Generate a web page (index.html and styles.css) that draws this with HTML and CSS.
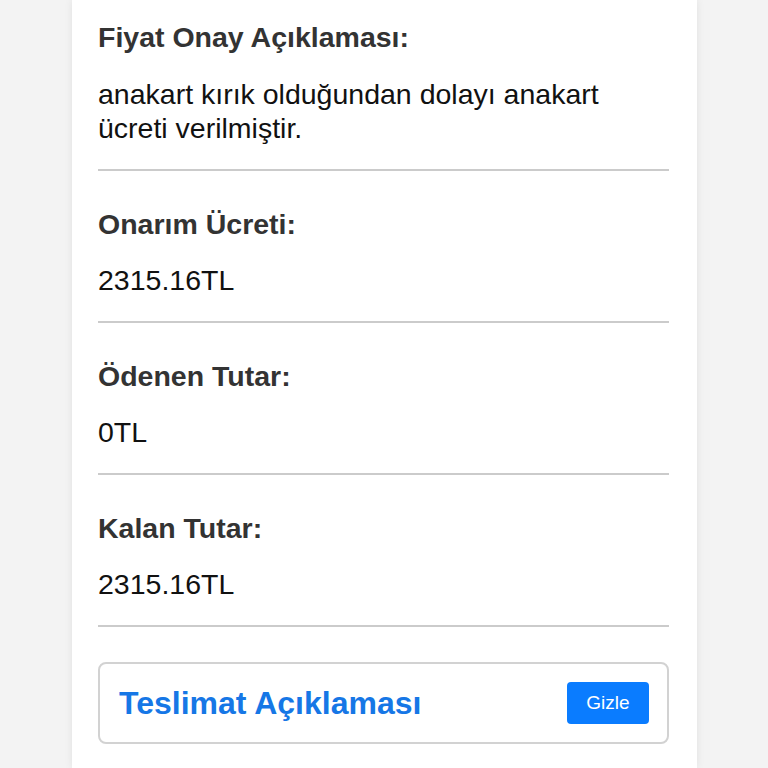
FILE: index.html
```html
<!DOCTYPE html>
<html lang="tr">
<head>
<meta charset="utf-8">
<link rel="stylesheet" href="styles.css">
</head>
<body>
<div class="page">
  <div class="card">
    <div class="section">
      <h3 class="label">Fiyat Onay Açıklaması:</h3>
      <p class="value">anakart kırık olduğundan dolayı anakart ücreti verilmiştir.</p>
    </div>
    <div class="section">
      <h3 class="label">Onarım Ücreti:</h3>
      <p class="value">2315.16TL</p>
    </div>
    <div class="section">
      <h3 class="label">Ödenen Tutar:</h3>
      <p class="value">0TL</p>
    </div>
    <div class="section">
      <h3 class="label">Kalan Tutar:</h3>
      <p class="value">2315.16TL</p>
    </div>
    <div class="panel">
      <h2 class="panel-title">Teslimat Açıklaması</h2>
      <button class="btn">Gizle</button>
    </div>
  </div>
</div>
</body>
</html>
```

FILE: styles.css
```css
html, body {
  margin: 0;
  padding: 0;
  background: #f3f3f3;
  font-family: "Liberation Sans", Arial, sans-serif;
}
.page {
  padding-left: 72px;
}
.card {
  width: 625px;
  min-height: 768px;
  box-sizing: border-box;
  background: #fff;
  padding: 21px 28px 0 26px;
  box-shadow: 0 0 8px rgba(0,0,0,0.08);
}
.section {
  border-bottom: 2px solid #cbcbcb;
  padding-bottom: 24px;
  margin-bottom: 37px;
}
.label {
  margin: 0;
  padding-top: 1px;
  font-size: 28.5px;
  line-height: 30px;
  font-weight: bold;
  color: #333;
}
.value {
  margin: 24px 0 0;
  padding-right: 20px;
  font-size: 28.5px;
  line-height: 34px;
  color: #111;
}
.section:first-child .value {
  margin-top: 25px;
}
.panel {
  display: flex;
  align-items: center;
  justify-content: space-between;
  border: 2px solid #d2d2d2;
  border-radius: 8px;
  height: 82px;
  box-sizing: border-box;
  padding: 0 18px 0 19px;
  margin-top: -2px;
}
.panel-title {
  margin: 0;
  font-size: 32px;
  font-weight: bold;
  color: #1677e6;
}
.btn {
  background: #0a7cff;
  color: #fff;
  border: none;
  border-radius: 4px;
  width: 82px;
  height: 42px;
  font-family: "Liberation Sans", Arial, sans-serif;
  font-size: 19px;
  padding: 0;
}
```
